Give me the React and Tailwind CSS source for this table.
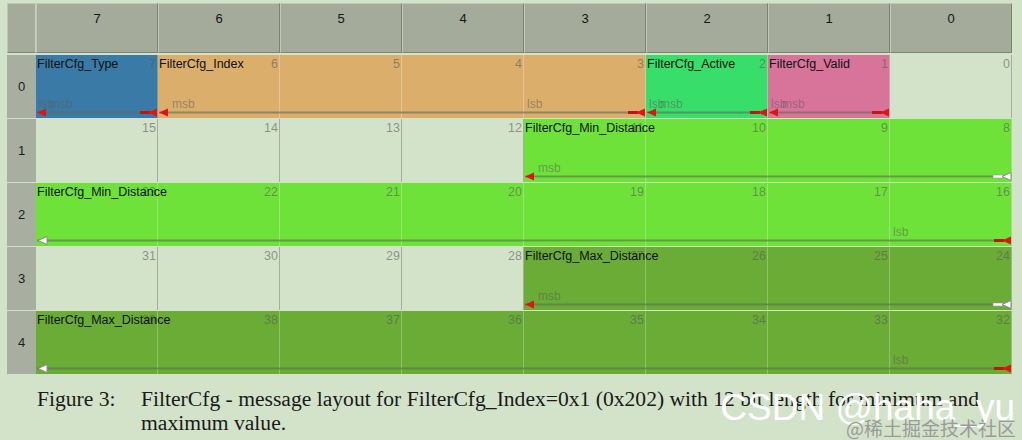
import React from 'react';

const W = 122;
const LINE_Y = 57.5;

const rows = [
  {
    n: '0',
    bits: [7, 6, 5, 4, 3, 2, 1, 0],
    segs: [
      { start: 0, span: 1, bg: 'bg-[#3a7aa6]', name: 'FilterCfg_Type', msb: true, lsb: true },
      { start: 1, span: 4, bg: 'bg-[#dcae6c]', name: 'FilterCfg_Index', msb: true, lsb: true },
      { start: 5, span: 1, bg: 'bg-[#38de6a]', name: 'FilterCfg_Active', msb: true, lsb: true },
      { start: 6, span: 1, bg: 'bg-[#d8749a]', name: 'FilterCfg_Valid', msb: true, lsb: true },
      { start: 7, span: 1, bg: null },
    ],
  },
  {
    n: '1',
    bits: [15, 14, 13, 12, 11, 10, 9, 8],
    segs: [
      { start: 0, span: 4, bg: null },
      { start: 4, span: 4, bg: 'bg-[#6ee238]', name: 'FilterCfg_Min_Distance', msb: true, contR: true },
    ],
  },
  {
    n: '2',
    bits: [23, 22, 21, 20, 19, 18, 17, 16],
    segs: [{ start: 0, span: 8, bg: 'bg-[#6ee238]', name: 'FilterCfg_Min_Distance', contL: true, lsb: true }],
  },
  {
    n: '3',
    bits: [31, 30, 29, 28, 27, 26, 25, 24],
    segs: [
      { start: 0, span: 4, bg: null },
      { start: 4, span: 4, bg: 'bg-[#6aac36]', name: 'FilterCfg_Max_Distance', msb: true, contR: true },
    ],
  },
  {
    n: '4',
    bits: [39, 38, 37, 36, 35, 34, 33, 32],
    segs: [{ start: 0, span: 8, bg: 'bg-[#6aac36]', name: 'FilterCfg_Max_Distance', contL: true, lsb: true }],
  },
];

function Cell({ bg, bit }) {
  const cls = bg
    ? `${bg} border-[#ffffff44]`
    : 'bg-[#d3e3ca] border-[#a6ad9f]';
  return (
    <div className={`relative h-full w-[122px] shrink-0 border-r ${cls}`}>
      <span className="absolute right-[1px] top-[2px] text-[12.5px] leading-[14px] text-[#5a5a5a99]">
        {bit}
      </span>
    </div>
  );
}

function Markers({ segs }) {
  const items = [];
  segs.forEach((s, k) => {
    if (!s.name) return;
    const x0 = s.start * W + 1;
    const x1 = (s.start + s.span) * W - 1;
    const y = LINE_Y;
    items.push(
      <line key={`l${k}`} x1={x0} y1={y} x2={x1} y2={y} stroke="#5f6a55" strokeOpacity="0.6" strokeWidth="2" />
    );
    if (s.msb) {
      items.push(
        <polygon key={`m${k}`} points={`${x0},${y} ${x0 + 9},${y - 4} ${x0 + 9},${y + 4}`} fill="#e01414" />
      );
    }
    if (s.contL) {
      items.push(
        <polygon
          key={`cl${k}`}
          points={`${x0 + 1},${y} ${x0 + 10},${y - 4} ${x0 + 10},${y + 4}`}
          fill="#ffffff"
          stroke="#8a8a8a"
          strokeWidth="1"
        />
      );
    }
    if (s.lsb) {
      items.push(
        <rect key={`lb${k}`} x={x1 - 17} y={y - 1.5} width="10" height="3" fill="#b81818" />,
        <polygon key={`lt${k}`} points={`${x1 - 9},${y} ${x1},${y - 4} ${x1},${y + 4}`} fill="#e01414" />
      );
    }
    if (s.contR) {
      items.push(
        <rect key={`cb${k}`} x={x1 - 18} y={y - 1.5} width="10" height="3" fill="#ffffff" stroke="#9a9a9a" strokeWidth="0.6" />,
        <polygon
          key={`ct${k}`}
          points={`${x1 - 9},${y} ${x1},${y - 4} ${x1},${y + 4}`}
          fill="#ffffff"
          stroke="#8a8a8a"
          strokeWidth="1"
        />
      );
    }
  });
  return (
    <svg className="pointer-events-none absolute left-0 top-0" width="976" height="63">
      {items}
    </svg>
  );
}

function DataRow({ row }) {
  const cells = [];
  row.segs.forEach((s) => {
    for (let i = 0; i < s.span; i++) {
      const col = s.start + i;
      cells.push(<Cell key={col} bg={s.bg} bit={row.bits[col]} />);
    }
  });
  return (
    <div className="flex h-[63px]">
      <div className="flex w-[29px] shrink-0 items-center justify-center bg-[#a9afa0] text-[13px] text-[#1c1c1c]">
        {row.n}
      </div>
      <div className="relative flex h-full w-[976px]">
        {cells}
        <Markers segs={row.segs} />
        {row.segs.map((s, k) =>
          s.name ? (
            <React.Fragment key={k}>
              <span
                className="absolute top-[2px] whitespace-nowrap text-[12.5px] leading-[14px] text-[#111111]"
                style={{ left: s.start * W + 1 }}
              >
                {s.name}
              </span>
              {s.lsb && (
                <span
                  className="absolute top-[42px] text-[12px] leading-[14px] text-[#5a5a5a88]"
                  style={{ left: (s.start + s.span - 1) * W + 3 }}
                >
                  lsb
                </span>
              )}
              {s.msb && (
                <span
                  className="absolute top-[42px] text-[12px] leading-[14px] text-[#5a5a5a88]"
                  style={{ left: s.start * W + 14 }}
                >
                  msb
                </span>
              )}
            </React.Fragment>
          ) : null
        )}
      </div>
    </div>
  );
}

export default function App() {
  const headers = ['7', '6', '5', '4', '3', '2', '1', '0'];
  return (
    <div className="relative h-[440px] w-[1022px] overflow-hidden bg-[#d3e3ca] font-['Liberation_Sans',Arial,sans-serif]">
      <div className="pl-[7px] pt-[3px]">
        <div className="flex h-[50px]">
          <div className="h-full w-[29px] shrink-0 border-b border-r border-l border-t border-b-[#7f8676] border-r-[#c9d2c0] border-l-[#bfc6b8] border-t-[#bfc6b8] bg-[#a4ab9b]" />
          {headers.map((h) => (
            <div
              key={h}
              className="flex h-full w-[122px] shrink-0 justify-center border-b border-l border-r border-t border-b-[#7d8474] border-l-[#c2c8ba] border-r-[#7d8474] border-t-[#c2c8ba] bg-[#a4ab9b] pt-[8px] text-[13px] leading-[14px] text-[#151515]"
            >
              {h}
            </div>
          ))}
        </div>
        <div className="mt-[2px] flex flex-col gap-[1px]">
          {rows.map((r) => (
            <DataRow key={r.n} row={r} />
          ))}
        </div>
      </div>
      <div className="mt-[13px] flex font-['Liberation_Serif',serif] text-[21.6px] leading-[24px] text-[#1a1a1a]">
        <div className="w-[141px] shrink-0 pl-[37px]">Figure 3:</div>
        <div className="w-[870px]">
          FilterCfg - message layout for FilterCfg_Index=0x1 (0x202) with 12 bit length for minimum and maximum value.
        </div>
      </div>
      <div className="absolute right-[7px] top-[389px] text-[37px] leading-[38px] text-white">CSDN @haha_yu</div>
      <div className="absolute right-[6px] top-[417px] font-['Noto_Sans_CJK_SC',sans-serif] text-[19px] leading-[22px] text-[#9a9a9a]">
        @稀土掘金技术社区
      </div>
    </div>
  );
}
